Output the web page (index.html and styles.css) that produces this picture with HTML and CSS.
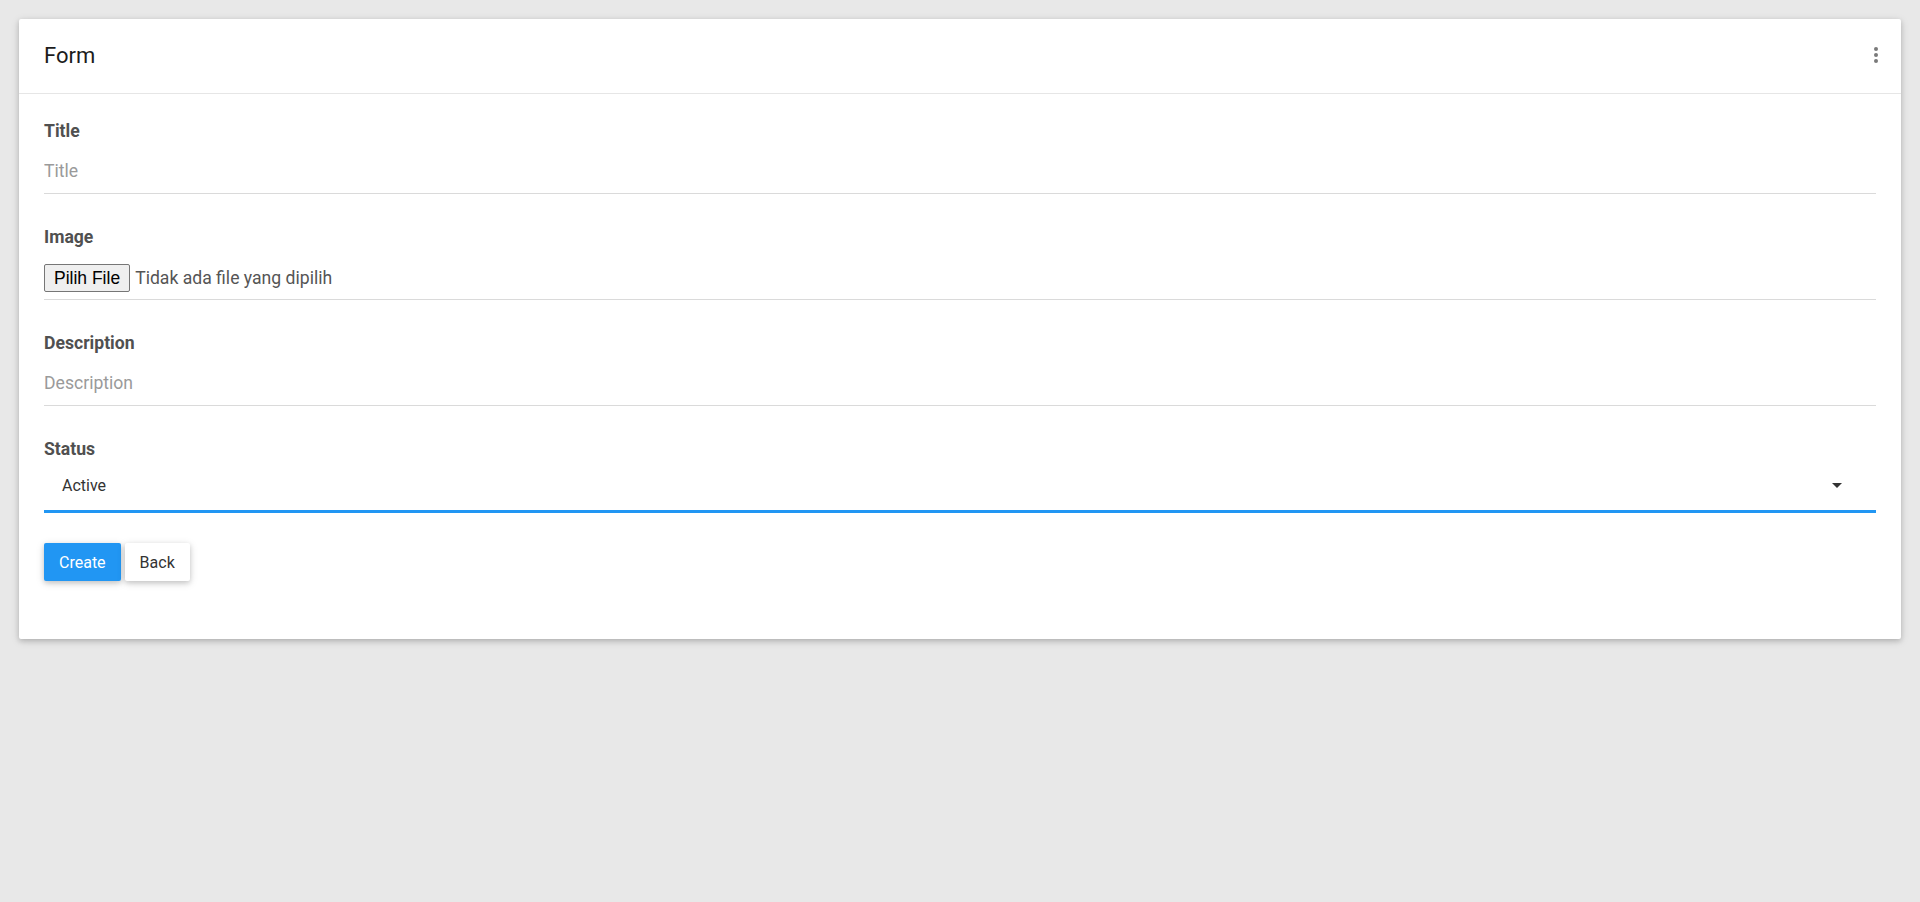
FILE: index.html
```html
<!DOCTYPE html>
<html lang="id">
<head>
    <meta charset="UTF-8">
    <meta name="viewport" content="width=device-width, initial-scale=1.0">
    <title>Form</title>
    <link rel="stylesheet" href="styles.css">
</head>
<body>
    <div class="card">
        <div class="card-header">
            <h1>Form</h1>
            <svg class="more" width="24" height="24" viewBox="0 0 24 24">
                <circle cx="12" cy="6" r="2"/>
                <circle cx="12" cy="12" r="2"/>
                <circle cx="12" cy="18" r="2"/>
            </svg>
        </div>
        <form class="card-body">
            <div class="group">
                <label for="title">Title</label>
                <input type="text" id="title" class="field" placeholder="Title">
            </div>
            <div class="group">
                <label>Image</label>
                <div class="field file-row">
                    <button type="button" class="file-btn">Pilih File</button>
                    <span class="file-name">Tidak ada file yang dipilih</span>
                </div>
            </div>
            <div class="group">
                <label for="description">Description</label>
                <input type="text" id="description" class="field" placeholder="Description">
            </div>
            <div class="group">
                <label>Status</label>
                <div class="select">
                    <span>Active</span>
                    <svg width="10" height="5" viewBox="0 0 10 5"><path d="M0 0h10L5 5z"/></svg>
                </div>
            </div>
            <div class="actions">
                <button type="submit" class="btn btn-primary">Create</button>
                <button type="button" class="btn btn-light">Back</button>
            </div>
        </form>
    </div>
</body>
</html>
```

FILE: styles.css
```css
body {
    margin: 0;
    padding: 19px;
    background-color: #e8e8e8;
    font-family: 'Roboto', 'Liberation Sans', sans-serif;
    color: #4f4f4f;
}
.card {
    background: #ffffff;
    border-radius: 2px;
    box-shadow: 0 2px 5px rgba(0, 0, 0, 0.16), 0 2px 10px rgba(0, 0, 0, 0.12);
}
.card-header {
    height: 75px;
    padding: 0 13px 2px 25px;
    box-sizing: border-box;
    display: flex;
    align-items: center;
    justify-content: space-between;
    border-bottom: 1px solid #e6e6e6;
}
.card-header h1 {
    margin: 0;
    font-size: 22px;
    font-weight: 400;
    color: #1c1c1c;
}
.more {
    fill: #7a7a7a;
}
.card-body {
    padding: 27px 25px 58px;
}
.group {
    margin-bottom: 33px;
}
.group label {
    display: block;
    font-size: 17.6px;
    line-height: 21px;
    font-weight: 700;
    color: #505050;
    margin-bottom: 10px;
}
.field {
    display: block;
    width: 100%;
    box-sizing: border-box;
    border: none;
    border-bottom: 1px solid #dadada;
    padding: 9px 0 11px;
    font-family: 'Roboto', 'Liberation Sans', sans-serif;
    font-size: 17.6px;
    line-height: 21px;
    color: #4f4f4f;
    outline: none;
    background: transparent;
}
.field::placeholder {
    color: #9a9a9a;
}
.file-row {
    display: flex;
    align-items: center;
    gap: 5px;
    padding: 6px 0 7px;
}
.file-btn {
    height: 28px;
    padding: 0 9px;
    font-family: 'Liberation Sans', Arial, sans-serif;
    font-size: 17.5px;
    color: #000000;
    background: #efefef;
    border: 1px solid #767676;
    border-radius: 2px;
}
.file-name {
    font-size: 17.6px;
    color: #555555;
}
.select {
    display: flex;
    align-items: center;
    justify-content: space-between;
    padding: 6px 34px 15px 18px;
    font-size: 16px;
    line-height: 19px;
    color: #333333;
    border-bottom: 3px solid #2196f3;
}
.select svg {
    fill: #333333;
}
.actions {
    display: flex;
    gap: 4px;
    margin-top: -3px;
}
.btn {
    height: 38px;
    padding: 0 15px;
    border: none;
    border-radius: 2px;
    font-family: 'Roboto', 'Liberation Sans', sans-serif;
    font-size: 16px;
    cursor: pointer;
    box-shadow: 0 2px 5px rgba(0, 0, 0, 0.16), 0 2px 10px rgba(0, 0, 0, 0.12);
}
.btn-primary {
    background-color: #2196f3;
    color: #ffffff;
}
.btn-light {
    background-color: #ffffff;
    color: #333333;
}
```
